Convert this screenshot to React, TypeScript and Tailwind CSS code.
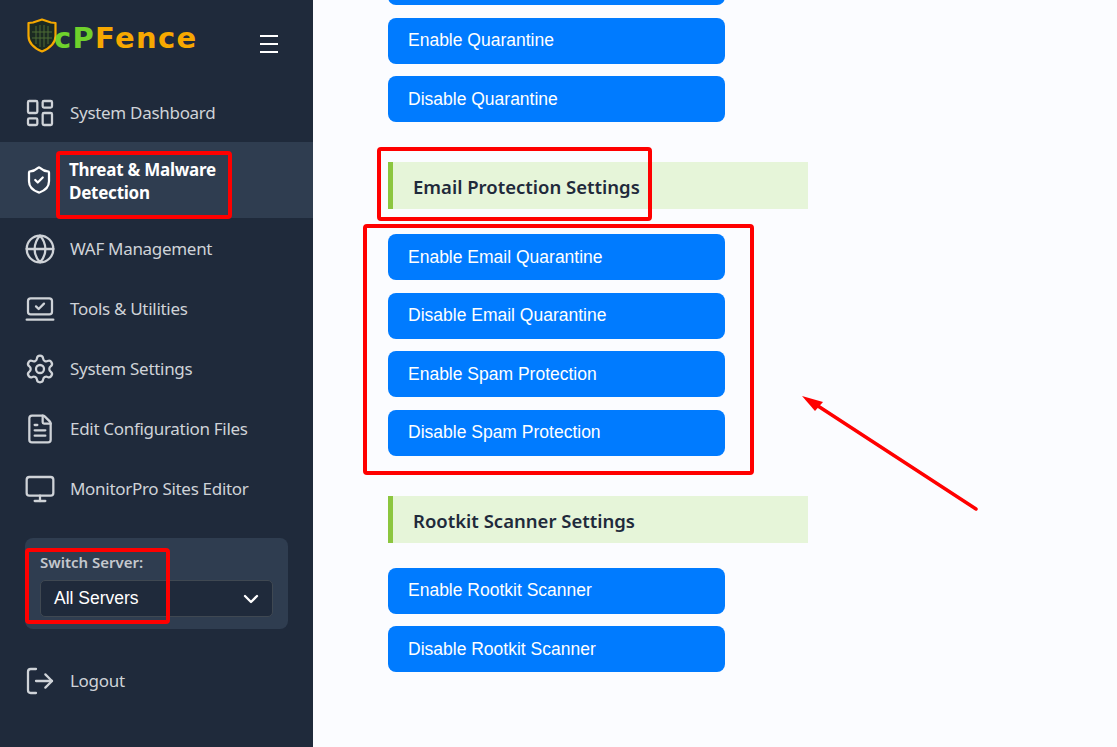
import React from 'react';
import {
  LayoutDashboard,
  ShieldCheck,
  Globe,
  LaptopMinimalCheck,
  Settings,
  FileText,
  Monitor,
  LogOut,
  ChevronDown,
} from 'lucide-react';

const NAV_ITEMS = [
  { label: 'WAF Management', icon: Globe },
  { label: 'Tools & Utilities', icon: LaptopMinimalCheck },
  { label: 'System Settings', icon: Settings },
  { label: 'Edit Configuration Files', icon: FileText },
  { label: 'MonitorPro Sites Editor', icon: Monitor },
];

const Logo = () => (
  <div className="flex items-start">
    <svg width="30" height="36" viewBox="0 0 30 36" className="shrink-0">
      <path d="M15 1.5 L24 4.5 L28.500 5 L28.500 18 C28.500 25 22 30.500 15 33.500 C8 30.500 1.500 25 1.500 18 L1.500 5 L6 4.500 Z" fill="#1b2a22" stroke="#f5a800" strokeWidth="2.200" strokeLinejoin="round" />
      <path d="M9 8v18M13 7v22M17 7v22M21 8v18M5 14h20M5 20h20" stroke="#4d6b35" strokeWidth="1" fill="none" />
    </svg>
    <span className="-ml-[3px] mt-[6px] text-[29px] leading-[29px] font-bold tracking-[1.300px] font-['DejaVu_Sans',sans-serif]">
      <span className="text-[#6fd12c]">cP</span>
      <span className="text-[#f7a800]">Fence</span>
    </span>
  </div>
);

const NavRow = ({ label, icon: Icon, className = 'h-[60px]' }: { label: string; icon: React.ElementType; className?: string }) => (
  <div className={`flex items-center pl-6 text-[#cfd3d8] ${className}`}>
    <Icon size={32} strokeWidth={1.7} className="shrink-0" />
    <span className="ml-[14px] text-[17px] leading-6 tracking-[-0.3px]">{label}</span>
  </div>
);

const Sidebar = () => (
  <nav className="flex h-[747px] w-[313px] shrink-0 flex-col bg-[#1f2a3b] font-['Noto_Sans',sans-serif]">
    <div className="flex h-[83px] items-start justify-between pt-[18px] pl-[27px] pr-[35px]">
      <Logo />
      <div className="mt-[17px] flex w-[18px] flex-col gap-[6px]">
        <span className="h-[2px] bg-white" />
        <span className="h-[2px] bg-white" />
        <span className="h-[2px] bg-white" />
      </div>
    </div>
    <NavRow label="System Dashboard" icon={LayoutDashboard} className="h-[59px]" />
    <div className="mb-px flex h-[76px] items-center bg-[#2f3d50] pl-6 text-white">
      <ShieldCheck size={30} strokeWidth={1.8} className="shrink-0" />
      <span className="ml-[15px] w-[170px] pt-px text-[17px] leading-[23px] font-bold tracking-[-0.25px]">Threat &amp; Malware Detection</span>
    </div>
    {NAV_ITEMS.map((item) => (
      <NavRow key={item.label} label={item.label} icon={item.icon} />
    ))}
    <div className="mx-[25px] mt-[19px] h-[91px] rounded-lg bg-[#2f3d50] px-[15px] pt-[15px]">
      <div className="text-[15px] leading-[19px] font-semibold text-[#c4c8ce]">Switch Server:</div>
      <div className="mt-2 flex h-[37px] items-center justify-between rounded-[5px] border border-[#3f4852] bg-[#1f2a3b] pl-[13px] pr-[9px] font-['Liberation_Sans',sans-serif] text-[17.500px] text-white">
        All Servers
        <ChevronDown size={24} strokeWidth={2.300} />
      </div>
    </div>
    <div className="mt-[22px]">
      <NavRow label="Logout" icon={LogOut} />
    </div>
  </nav>
);

const ActionButton = ({ label = '', className = '' }: { label?: string; className?: string }) => (
  <div className={`flex h-[46px] w-[337px] items-center rounded-lg bg-[#007bff] pl-5 font-['Liberation_Sans',sans-serif] text-[17.500px] text-white ${className}`}>
    {label}
  </div>
);

const SectionTitle = ({ label, className = '' }: { label: string; className?: string }) => (
  <div className={`flex h-[47px] w-[420px] items-center border-l-[5px] border-[#8cc63f] bg-[#e6f5d9] pl-5 pt-0.5 font-['Noto_Sans',sans-serif] text-[18.500px] font-semibold text-[#1f2a3b] ${className}`}>
    {label}
  </div>
);

const Annotations = () => (
  <>
    <div className="absolute left-[56px] top-[151px] h-[68px] w-[176px] rounded-sm border-[4px] border-[#f00]" />
    <div className="absolute left-[25px] top-[548px] h-[76px] w-[145px] rounded-sm border-[4px] border-[#f00]" />
    <div className="absolute left-[377px] top-[147px] h-[74px] w-[275px] rounded-sm border-[4px] border-[#f00]" />
    <div className="absolute left-[363px] top-[224px] h-[251px] w-[391px] rounded-sm border-[4px] border-[#f00]" />
    <svg className="absolute left-[795px] top-[390px]" width="190" height="125" viewBox="0 0 190 125">
      <line x1="181" y1="119" x2="23" y2="16" stroke="#f00" strokeWidth="3.500" strokeLinecap="round" />
      <polygon points="7,6 28,12 20,21" fill="#f00" />
    </svg>
  </>
);

export default function App() {
  return (
    <div className="relative flex h-[747px] w-[1117px] overflow-hidden bg-[#fbfcff]">
      <Sidebar />
      <main className="pl-[75px]">
        <div className="-mt-[41px] flex flex-col">
          <ActionButton />
          <ActionButton label="Enable Quarantine" className="mt-[13px] pb-px" />
          <ActionButton label="Disable Quarantine" className="mt-3" />
          <SectionTitle label="Email Protection Settings" className="mt-10" />
          <ActionButton label="Enable Email Quarantine" className="mt-[25px]" />
          <ActionButton label="Disable Email Quarantine" className="mt-[13px] pb-px" />
          <ActionButton label="Enable Spam Protection" className="mt-3" />
          <ActionButton label="Disable Spam Protection" className="mt-[13px] pb-px" />
          <SectionTitle label="Rootkit Scanner Settings" className="mt-10" />
          <ActionButton label="Enable Rootkit Scanner" className="mt-[25px] pb-px" />
          <ActionButton label="Disable Rootkit Scanner" className="mt-3" />
        </div>
      </main>
      <Annotations />
    </div>
  );
}
